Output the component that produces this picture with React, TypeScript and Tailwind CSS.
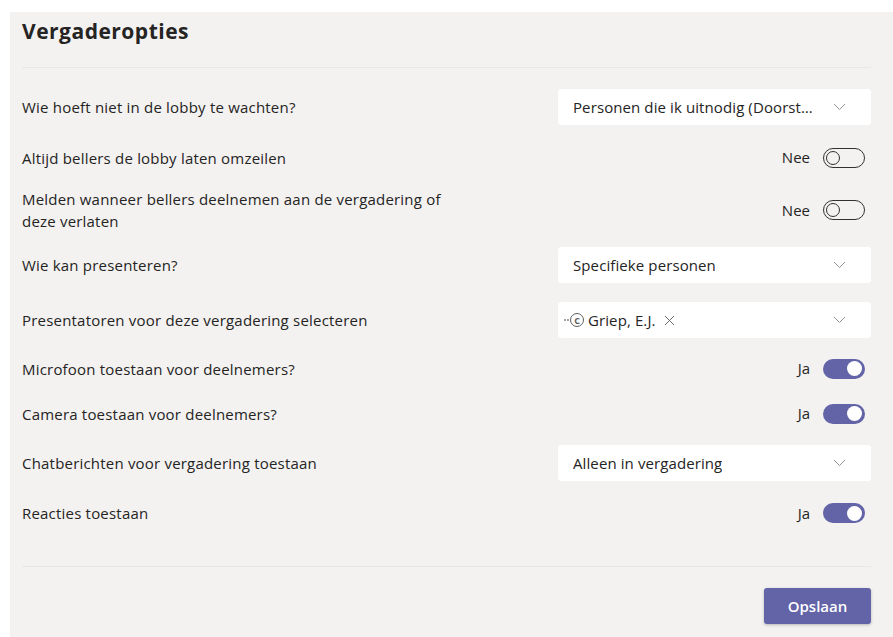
import { X } from 'lucide-react';

type Row =
  | { kind: 'select'; label: string; value: string; h: string }
  | { kind: 'people'; label: string; h: string }
  | { kind: 'toggle'; label: string; on: boolean; h: string; wide?: boolean };

// opties in volgorde, hoogtes per rij
const ROWS: Row[] = [
  { kind: 'select', label: 'Wie hoeft niet in de lobby te wachten?', value: 'Personen die ik uitnodig (Doorsturen niet toegestaan)', h: 'h-[50px]' },
  { kind: 'toggle', label: 'Altijd bellers de lobby laten omzeilen', on: false, h: 'h-[51px]' },
  { kind: 'toggle', label: 'Melden wanneer bellers deelnemen aan de vergadering of deze verlaten', on: false, h: 'h-[54px]', wide: true },
  { kind: 'select', label: 'Wie kan presenteren?', value: 'Specifieke personen', h: 'h-[56px]' },
  { kind: 'people', label: 'Presentatoren voor deze vergadering selecteren', h: 'h-[54px]' },
  { kind: 'toggle', label: 'Microfoon toestaan voor deelnemers?', on: true, h: 'h-[43px]' },
  { kind: 'toggle', label: 'Camera toestaan voor deelnemers?', on: true, h: 'h-[47px]' },
  { kind: 'select', label: 'Chatberichten voor vergadering toestaan', value: 'Alleen in vergadering', h: 'h-[52px]' },
  { kind: 'toggle', label: 'Reacties toestaan', on: true, h: 'h-[48px]' },
];

function Chevron() {
  return (
    <svg width="13" height="8" viewBox="0 0 13 8" className="shrink-0">
      <polyline points="1,1 6.5,6.5 12,1" fill="none" stroke="#979593" strokeWidth="1" />
    </svg>
  );
}

function Toggle({ on }: { on: boolean }) {
  return (
    <div className="flex items-center gap-[13px] mr-[6px]">
      <span className="text-[15px] text-[#252423]">{on ? 'Ja' : 'Nee'}</span>
      {on ? (
        <div className="w-[42px] h-[20px] rounded-full bg-[#6264a7] flex items-center justify-end px-[3px]">
          <div className="w-[15px] h-[15px] rounded-full bg-white" />
        </div>
      ) : (
        <div className="w-[42px] h-[20px] rounded-full border border-[#323130] flex items-center px-[2px]">
          <div className="w-[14px] h-[14px] rounded-full border-[1.5px] border-[#323130]" />
        </div>
      )}
    </div>
  );
}

function Select({ children }: { children: React.ReactNode }) {
  return (
    <div className="w-[313px] h-[36px] bg-white rounded-[3px] flex items-center pl-[15px] pr-[25px] gap-4">
      <div className="flex-1 min-w-0 flex items-center">{children}</div>
      <Chevron />
    </div>
  );
}

export default function App() {
  return (
    <div
      className="w-[893px] h-[637px] bg-white pt-[12px] pl-[10px] overflow-hidden"
      style={{ fontFamily: '"Open Sans", "Noto Sans", sans-serif' }}>
      <div className="h-[625px] bg-[#f3f2f1] pl-[12px] pr-[22px] flex flex-col">

        <h1 className="pt-[5px] text-[21px] leading-[28px] font-bold text-[#252423] tracking-[0.5px]">
          Vergaderopties
        </h1>
        <div className="h-px bg-[#e9e7e5] mt-[22px]" />

        <div className="pt-[14px] flex flex-col">
          {ROWS.map(r => (
            <div key={r.label} className={`flex items-center justify-between ${r.h}`}>
              <p className={`text-[15px] leading-[22px] tracking-[0.2px] text-[#252423] ${r.wide ? 'w-[440px]' : ''}`}>
                {r.label}
              </p>
              {r.kind === 'toggle' && <Toggle on={r.on} />}
              {r.kind === 'select' && (
                <Select>
                  <span className="truncate text-[15px] tracking-[0.1px] text-[#252423]">{r.value}</span>
                </Select>
              )}
              {r.kind === 'people' && (
                <Select>
                  <div className="flex items-center -ml-[9px] text-[15px]">
                    {/* avatar-placeholder: twee puntjes + rondje */}
                    <span className="w-[2px] h-[2px] rounded-full bg-[#8a8886]" />
                    <span className="w-[2px] h-[2px] rounded-full bg-[#8a8886] ml-[1px] mr-[1px]" />
                    <span className="w-[14px] h-[14px] rounded-full border-[1.5px] border-[#605e5c] text-[#605e5c] text-[9px] font-bold flex items-center justify-center leading-none">
                      C
                    </span>
                    <span className="text-[#252423] ml-[4px] tracking-[0.1px]">Griep, E.J.</span>
                    <X size={17} strokeWidth={1.3} className="text-[#605e5c] ml-[5px]" />
                  </div>
                </Select>
              )}
            </div>
          ))}
        </div>

        <div className="h-px bg-[#e9e7e5] mt-[29px]" />

        <div className="flex justify-end pt-[21px]">
          <button className="w-[107px] h-[36px] rounded-[3px] bg-[#6264a7] text-white text-[15px] font-semibold shadow-[0_1px_3px_rgba(0,0,0,0.25)]">
            Opslaan
          </button>
        </div>
      </div>
    </div>
  );
}
